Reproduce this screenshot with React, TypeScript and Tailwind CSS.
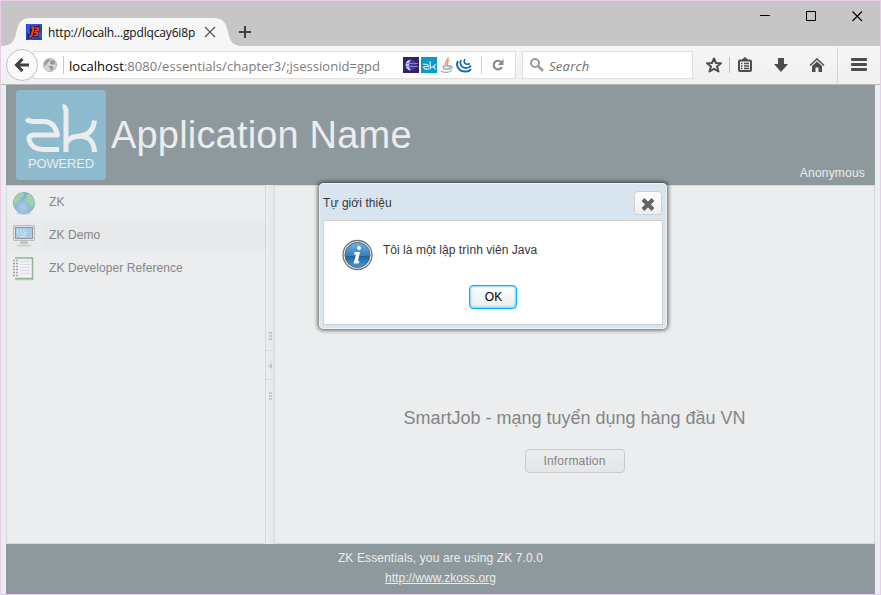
import React from 'react';

const ui = "font-['Open_Sans','Noto_Sans',sans-serif]";

function ZkGlyph({ className, color, width }: { className?: string; color: string; width: number }) {
  return (
    <svg viewBox="0 0 74 50" className={className} fill="none" stroke={color} strokeWidth={width}>
      <path d="M1.500 14.500C3 17 5 17.500 9 17.500H19C28 17.500 31 24 32.500 31H10C3.500 31 3.500 34 4.500 37C6.500 43 11 45.500 18 45.500H34" strokeLinejoin="round" />
      <path d="M37.500 2.500C40.500 2.500 41 4 41 8V48M41 41C42 35 48 32.500 55 32C64 31 68.500 26 69.500 16.500M55 32C65 33 69 38 69.500 48" />
    </svg>
  );
}

function Tabs() {
  return (
    <div className="relative flex h-[45px] shrink-0 bg-[#c6c6c6]">
      <svg className="absolute left-0 top-[17px]" width="240" height="28" viewBox="0 0 240 28">
        <path d="M0 28C10 28 13 24 15 16C17 6 19 0 30 0H213C222 0 225 5 227 14C229 23 232 28 240 28Z" fill="#f6f6f6" />
      </svg>
      <div className={`relative flex h-[28px] w-[258px] mt-[17px] items-center pl-[25px] text-[12px] text-[#111] ${ui}`}>
        <svg width="16" height="16" viewBox="0 0 16 16" className="shrink-0">
          <rect width="16" height="16" fill="#2459e8" />
          <path d="M1 0L0 7L4 11L2 16H0V0ZM12 0L16 3V9L13 8ZM7 15L10 12L15 14L16 16H6Z" fill="#1648bd" />
          <path d="M4 2H13.500V6L12.500 10.500V13H7L6 14.500H2V10.500H4Z" fill="#241331" />
          <path d="M5 3.500H7.500L5.500 12.500H3" fill="none" stroke="#f04128" strokeWidth="2" />
          <path d="M9 4H12.500L12 6.500H8.800M8.500 8.500H11.500L11 11.500H8" fill="none" stroke="#f04128" strokeWidth="1.700" />
        </svg>
        <span className="ml-[6px] w-[148px] whitespace-nowrap pt-px tracking-[-0.17px]">http://localh...gpdlqcay6i8p</span>
        <svg width="12" height="12" viewBox="0 0 12 12" className="ml-[8px] shrink-0" stroke="#555" strokeWidth="1.200">
          <path d="M1 1L11 11M11 1L1 11" />
        </svg>
        <svg width="12" height="12" viewBox="0 0 12 12" className="ml-[23px] shrink-0" stroke="#404040" strokeWidth="2">
          <path d="M6 0V12M0 6H12" />
        </svg>
      </div>
      <div className="ml-auto mr-[17px] mt-[10px] flex h-[11px] gap-[35px]">
        <svg width="11" height="11" viewBox="0 0 11 11" stroke="#000"><path d="M0 4.500H10" /></svg>
        <svg width="11" height="11" viewBox="0 0 11 11" fill="none" stroke="#000"><path d="M.5.5H9.500V9.500H.5Z" /></svg>
        <svg width="11" height="11" viewBox="0 0 11 11" stroke="#000" strokeWidth="1.100"><path d="M.5.5L10 10M10 .5L.5 10" /></svg>
      </div>
    </div>
  );
}

function Toolbar() {
  return (
    <div className={`flex h-[39px] shrink-0 items-center border-b border-[#b9b9b9] bg-gradient-to-b from-[#f6f6f6] to-[#efefef] ${ui}`}>
      <div className="z-10 ml-[5px] flex h-[32px] w-[32px] shrink-0 items-center justify-center rounded-full border border-[#c3c3c3] bg-[#fafafa]">
        <svg width="16" height="14" viewBox="0 0 16 14" fill="none" stroke="#404040" strokeWidth="3">
          <path d="M8.500 1L2.500 7L8.500 13M3 7H15" />
        </svg>
      </div>
      <div className="-ml-[5px] flex h-[28px] w-[483px] shrink-0 items-center border border-[#dfdfdf] bg-white pl-[9px]">
        <svg width="14" height="14" viewBox="0 0 14 14" className="shrink-0">
          <circle cx="7" cy="7" r="6.500" fill="#d6d6d6" stroke="#b4b4b4" />
          <path d="M1 6L3 2L6 1L7 3L5 4L4 6L2 8ZM8 2L12 3V7L10 6L8 7L7 5ZM5 8L9 8L11 10L8 13L7 10Z" fill="#999" />
        </svg>
        <div className="ml-[6px] h-[18px] w-px shrink-0 bg-[#c8c8c8]" />
        <div className="ml-[5px] w-[324px] shrink-0 overflow-hidden whitespace-nowrap pt-px text-[13px] leading-[22px] tracking-[0.045px] text-[#7b7b7b]">
          <span className="text-black">localhost</span>:8080/essentials/chapter3/;jsessionid=gpd
        </div>
        <svg width="16" height="16" viewBox="0 0 16 16" className="ml-[10px] shrink-0">
          <rect width="16" height="16" fill="#30206d" />
          <circle cx="8.500" cy="8" r="5" fill="#4b3897" />
          <path d="M8 2.500A5.500 5.500 0 0 0 8 13.500A8 8 0 0 1 6 8A8 8 0 0 1 8 2.500" fill="#cfc7f0" />
          <path d="M3 6.500H15M3 9.500H15" stroke="#7486d8" />
        </svg>
        <div className="ml-[2px] flex h-[16px] w-[16px] shrink-0 items-center justify-center bg-[#079bc8]">
          <ZkGlyph color="#e0fbff" width={6} className="h-[9px] w-[13px]" />
        </div>
        <svg width="14" height="16" viewBox="0 0 14 16" className="ml-[3px] shrink-0" fill="none">
          <path d="M8 0C9 3 4 4 6 8M9 3C6 5 9 6 7 8" stroke="#ed8a47" strokeWidth="1.200" />
          <path d="M3 9H10L9 12H4L3 9M10 9C14 9 12 12 9 12M1 14C4 16 10 16 12 13" stroke="#98acbd" strokeWidth="1.300" />
        </svg>
        <svg width="16" height="15" viewBox="0 0 16 15" className="ml-[2px] shrink-0" fill="none" stroke="#1769ad">
          <path d="M2 3C-1 9 4 14 10 13.500C12 13.500 14 12.500 15 11" strokeWidth="1.900" />
          <path d="M5 2C3 7 6 10.500 11 10C13 10 14 9 15 7.500" strokeWidth="1.700" />
          <path d="M9 1C7 4 9 8 14 5.500" strokeWidth="1.500" />
        </svg>
        <div className="ml-[9px] h-[18px] w-px shrink-0 bg-[#cbcbcb]" />
        <svg width="12" height="12" viewBox="0 0 12 12" className="ml-[10px] shrink-0" fill="none">
          <path d="M9 3A4.300 4.300 0 1 0 9.800 8" stroke="#858585" strokeWidth="2.100" />
          <path d="M11.500 0V6H6Z" fill="#858585" />
        </svg>
      </div>
      <div className="ml-[6px] flex h-[28px] w-[171px] shrink-0 items-center border border-[#dfdfdf] bg-white pl-[7px]">
        <svg width="14" height="14" viewBox="0 0 14 14" fill="none" stroke="#999" strokeWidth="2">
          <circle cx="5" cy="5" r="4" /><path d="M8 8L13 13" strokeWidth="2.500" />
        </svg>
        <span className="ml-[5px] pt-[3px] text-[13px] italic tracking-[0.25px] text-[#6e6e6e]">Search</span>
      </div>
      <svg width="16" height="16" viewBox="0 0 16 16" className="ml-[13px] shrink-0" fill="none" stroke="#4d4d4d" strokeWidth="2">
        <path d="M8 1.500L10 6L15 6.300L11 9.500L12.500 14.500L8 11.800L3.500 14.500L5 9.500L1 6.300L6 6Z" strokeLinejoin="round" />
      </svg>
      <div className="ml-[7px] h-[16px] w-px bg-[#c3c3c3]" />
      <svg width="14" height="16" viewBox="0 0 14 16" className="ml-[8px] shrink-0" fill="none" stroke="#4d4d4d">
        <rect x="1" y="3.500" width="12" height="10.500" rx="1" strokeWidth="2" /><path d="M4 3L7 .5L10 3Z" fill="#4d4d4d" />
        <path d="M3 6.500H4.500M6 6.500H11M3 9H4.500M6 9H11M3 11.500H4.500M6 11.500H11" strokeWidth="1.300" />
      </svg>
      <svg width="14" height="14" viewBox="0 0 14 14" className="ml-[22px] shrink-0" fill="#4d4d4d"><path d="M4 0H10V6H14L7 14L0 6H4Z" /></svg>
      <svg width="16" height="14" viewBox="0 0 16 14" className="ml-[21px] shrink-0" fill="#4d4d4d">
        <path d="M3 8L8 3.500L13 8V14H9.500V9.500H6.500V14H3Z" /><path d="M1 7.500L8 1L15 7.500" fill="none" stroke="#4d4d4d" strokeWidth="1.500" />
      </svg>
      <div className="ml-[12px] h-[36px] w-px bg-[#d5d5d5]" />
      <div className="ml-[13px] flex w-[16px] flex-col gap-[2px] pb-px">
        <div className="h-[3px] rounded-[1px] bg-[#4d4d4d]" /><div className="h-[3px] rounded-[1px] bg-[#4d4d4d]" /><div className="h-[3px] rounded-[1px] bg-[#4d4d4d]" />
      </div>
    </div>
  );
}

function Globe() {
  return (
    <svg width="24" height="24" viewBox="0 0 24 24">
      <defs><radialGradient id="globe" cx="45%" cy="70%"><stop stopColor="#a8d0e9" /><stop offset="1" stopColor="#82add5" /></radialGradient></defs>
      <ellipse cx="12" cy="22.500" rx="8" ry="1.500" fill="#d3d7d9" />
      <circle cx="12" cy="12" r="11" fill="url(#globe)" />
      <path d="M2 8L6 3L11 1.500L12 5L8 8L7 10L4 12L2 14ZM14 4L17 2.500L21 6L23 11L20 17L18 15L17 12L13 11L12 8L15 7ZM9 16L12 18L11 21L9 20Z" fill="#a0d3a4" />
    </svg>
  );
}

function Monitor() {
  return (
    <svg width="24" height="24" viewBox="0 0 24 24">
      <ellipse cx="12" cy="21.500" rx="8" ry="1" fill="#cdcfd0" />
      <path d="M9 16H15L16 20H8Z" fill="#c3c5c7" />
      <rect x="1.500" y="1.500" width="21" height="15" rx=".5" fill="#dedfdf" stroke="#babdbd" />
      <rect x="3.500" y="3.500" width="17" height="11" fill="#a6cce6" stroke="#929798" />
      <path d="M6 5C4 11 9 14 14 12M9 5C8 9 11 11 14 10M12 5C11 8 13 9 15 8" fill="none" stroke="#dceaf3" />
    </svg>
  );
}

function Notebook() {
  return (
    <svg width="24" height="24" viewBox="0 0 24 24">
      <path d="M3 22.500H22" stroke="#c5cbc7" strokeWidth="1.500" />
      <rect x="3.500" y="1" width="17" height="20.500" fill="#eff1f3" />
      <path d="M3 1H20.500V21.500H3" fill="none" stroke="#92b39a" strokeWidth="1.500" />
      <path d="M8 4.500H18M8 7.500H18M8 10.500H18M8 13.500H18M8 16.500H18" stroke="#d5dce6" />
      <path d="M1 3.500H6M1 6.500H6M1 9.500H6M1 12.500H6M1 15.500H6M1 18.500H6" stroke="#a3a6a8" strokeWidth="1.300" strokeDasharray="2 1" />
    </svg>
  );
}

function Dots() {
  return <div className="flex flex-col gap-px">{[0, 1, 2].map(i => <div key={i} className="h-[2px] w-[3px] bg-[#c7c8ca]" />)}</div>;
}

const links = [{ label: 'ZK', icon: <Globe /> }, { label: 'ZK Demo', icon: <Monitor /> }, { label: 'ZK Developer Reference', icon: <Notebook /> }];

function Dialog() {
  return (
    <div className="absolute left-[318px] top-[182px] flex h-[146px] w-[348px] flex-col rounded-[4px] border border-[#edf3f7] bg-[#d9e5ee] px-[3px] pb-[3px] text-[12px] text-[#363636] shadow-[0_0_4px_1px_rgba(0,0,0,.65)]">
      <div className="flex h-[36px] shrink-0 items-center justify-between pt-[1px]">
        <span className="whitespace-nowrap tracking-[0.06px]">Tự giới thiệu</span>
        <div className="mr-[1px] mt-px flex h-[24px] w-[28px] items-center justify-center rounded-[4px] border border-[#cfcfcf] bg-gradient-to-b from-white to-[#f0f0f0]">
          <svg width="14" height="13" viewBox="0 0 14 13" className="mt-[2px]" stroke="#636363" strokeWidth="4"><path d="M2 1.500L12 11.500M12 1.500L2 11.500" /></svg>
        </div>
      </div>
      <div className="flex flex-1 flex-col border border-[#cfcfcf] bg-white">
        <div className="flex pl-[18px] pt-[18px]">
          <svg width="32" height="32" viewBox="0 0 32 32">
            <defs><linearGradient id="info" x2="0" y2="1"><stop stopColor="#70b1df" /><stop offset=".55" stopColor="#347fb9" /><stop offset=".56" stopColor="#20669d" /><stop offset="1" stopColor="#4b9bd0" /></linearGradient></defs>
            <circle cx="15.500" cy="16" r="14.500" fill="#eee" stroke="#777" strokeWidth="1.300" />
            <circle cx="15.500" cy="16" r="12.500" fill="url(#info)" stroke="#45677f" />
            <circle cx="17" cy="9" r="2" fill="#f8fbff" />
            <path d="M12.500 13H18L16 22H17.500L16.500 24.500H11.500L14 15.500H12Z" fill="#f8fbff" />
          </svg>
          <span className="ml-[9px] mt-[3px] h-[18px] whitespace-nowrap leading-[17px] tracking-[0.03px]">Tôi là một lập trình viên Java</span>
        </div>
        <button className="mx-auto mt-[14px] h-[24px] w-[48px] rounded-[4px] border border-[#00b4f5] bg-gradient-to-b from-white to-[#ececec] pl-px text-black shadow-[inset_0_0_3px_#00b6f5]">OK</button>
      </div>
    </div>
  );
}

export default function App() {
  return (
    <div className="relative flex h-[595px] w-[881px] flex-col overflow-hidden border border-[#e6cee7] bg-[#ebedee] font-['Liberation_Sans',Arial,sans-serif] text-[12px]">
      <Tabs />
      <Toolbar />
      <div className="mx-[5px] flex min-h-0 flex-1 flex-col">
        <header className="flex h-[100px] shrink-0 items-center bg-[#8e999d] text-[#ebeced]">
          <div className="ml-[10px] flex h-[90px] w-[90px] shrink-0 flex-col items-center rounded-[4px] bg-[#8dbbcd] pt-[14px]">
            <ZkGlyph color="#ebeced" width={5} className="ml-[2px] h-[50px] w-[74px] shrink-0" />
            <span className="mt-[2px] text-[13px] leading-[15px] tracking-[-0.15px]">POWERED</span>
          </div>
          <h1 className="ml-[5px] whitespace-nowrap text-[38px] leading-[44px] tracking-[0.18px]">Application Name</h1>
          <span className="ml-auto mr-[10px] self-end pb-[3px] leading-[17px] tracking-[0.2px]">Anonymous</span>
        </header>
        <main className="flex min-h-0 flex-1">
          <nav className="w-[260px] shrink-0 border border-[#d7d9db] text-[#858688]">
            {links.map((link, i) => (
              <div key={link.label} className={`flex h-[33px] items-center ${i === 1 ? 'bg-[#e7e9ea]' : ''}`}>
                <div className={`flex h-[33px] w-[36px] shrink-0 items-center border-r border-[#ebedee] pl-[5px] pt-[1px] ${i === 1 ? 'bg-[#e8eaeb]' : ''}`}>{link.icon}</div>
                <span className="ml-[6px] whitespace-nowrap pb-[1px] tracking-[0.08px]">{link.label}</span>
              </div>
            ))}
          </nav>
          <div className="flex w-[8px] shrink-0 flex-col items-center bg-gradient-to-r from-[#ebedee] to-[#e4e6e7] pt-[147px]">
            <Dots />
            <div className="mt-[10px] flex h-[30px] w-full items-center justify-center border-y border-[#d8dadc] pt-px">
              <svg width="4" height="6" viewBox="0 0 4 6"><path d="M4 0V6L0 3Z" fill="#c4c5c7" /></svg>
            </div>
            <div className="mt-[12px]"><Dots /></div>
          </div>
          <section className="flex flex-1 flex-col items-center border border-[#d7d9db] pt-[220px] text-[#858585]">
            <div className="whitespace-nowrap text-[18px] leading-[24px]">SmartJob - mạng tuyển dụng hàng đầu VN</div>
            <button className="mt-[19px] h-[24px] w-[100px] rounded-[4px] border border-[#c9cbcd] bg-gradient-to-b from-[#ebedee] to-[#e3e5e7] tracking-[0.2px]">Information</button>
          </section>
        </main>
        <footer className="flex h-[50px] shrink-0 flex-col items-center bg-[#8e999d] pt-[4px] leading-[20px] text-[#ebeced]">
          <div className="tracking-[0.12px]">ZK Essentials, you are using ZK 7.0.0</div>
          <a className="tracking-[0.05px] underline">http://www.zkoss.org</a>
        </footer>
      </div>
      <Dialog />
    </div>
  );
}
